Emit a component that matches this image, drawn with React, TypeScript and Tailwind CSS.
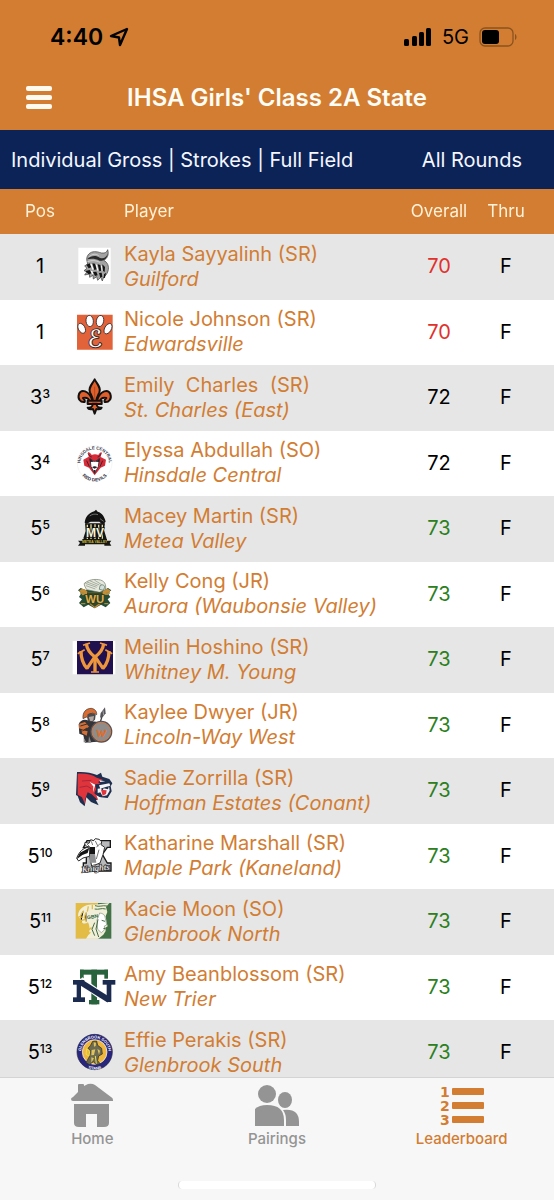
import type { ReactNode } from "react"

type TPlayer = {
    pos: string;
    tie?: string;
    name: string;
    school: string;
    score: number;
    logo: ReactNode;
}

const Logo = ({ children, label }: { children: ReactNode; label: string }) => (
    <svg viewBox="0 0 132 132" className="mx-auto block size-11" role="img" aria-label={label}>{children}</svg>
)

const GuilfordLogo = (
    <>
        <path d="M19 8h97v109H19z" fill="#fff" />
        <path d="M44 44c0-14 10-24 24-24 12-1 18 6 28 4 6-1 9-4 11-10 5 16-2 27-12 32 12 6 17 18 13 32-3 10-8 15-13 18l-4 12-5-11-9 9-3-11-10 7-1-11-10 6-1-10-14 3 7-10-9-3 9-7-7-7 9-6z" fill="#a3a3a3" stroke="#3a3a3a" strokeWidth="2" />
        <path d="M45 43c12-12 28-12 38-5 12 5 21-1 24-13-1 17-13 24-24 22-14-7-25-7-38-4z" fill="#2a2a2a" />
        <path d="M52 35c9-9 20-9 28-3M46 50c14-5 26-4 38 2" stroke="#e9e9e9" strokeWidth="2" fill="none" />
        <path d="m43 59 10-4 5 12-8 3zM61 55l8 1 5 17-7 2zM77 58l8 2 3 17-6 2zM91 58l8 8-1 15-6-4zM40 78l13-3 6 10-9 3zM63 81l10-1 4 11-8 2zM81 84l8-1 2 12-6 3zM96 88l6-5-3 15-4 2z" fill="#141414" />
        <path d="m55 58 4-1 6 16-3 2zM71 58l4 1 4 17-3 1zM87 61l3 2 2 14-3 1zM56 78l5 0 3 9-4 1z" fill="#fff" />
    </>
)

const EdwardsvilleLogo = (
    <>
        <path d="M15 11h107v105H15z" fill="#e2633a" />
        <g fill="#fff" stroke="#3b2b2b" strokeWidth="2.5">
            <ellipse cx="29" cy="52" rx="10" ry="16" transform="rotate(-28 29 52)" />
            <ellipse cx="53" cy="30" rx="11" ry="17" transform="rotate(-6 53 30)" />
            <ellipse cx="84" cy="30" rx="11" ry="17" transform="rotate(12 84 30)" />
            <ellipse cx="108" cy="53" rx="10" ry="17" transform="rotate(30 108 53)" />
        </g>
        <text x="68" y="109" fontSize="72" textAnchor="middle" fontFamily="DejaVu Serif, DejaVu Sans, serif" fill="#fff" stroke="#3b2b2b" strokeWidth="6" strokeLinejoin="round" paintOrder="stroke">ℰ</text>
    </>
)

const StCharlesLogo = (
    <>
        <g fill="#e0602c" stroke="#141010" strokeWidth="6" strokeLinejoin="round">
            <path d="M60 70C50 44 28 38 21 54c-5 14 4 26 17 24 2-6-1-9-5-12 12-4 21 4 22 18z" />
            <path d="M76 70C86 44 108 38 115 54c5 14-4 26-17 24-2-6 1-9 5-12-12-4-21 4-22 18z" />
            <path d="M68 10C60 26 48 34 54 50c5 10 9 16 9 26h10c0-10 4-16 9-26 6-16-6-24-14-40z" />
            <path d="M62 84c0 10-6 12-15 11 3 8 13 4 16 4l5 14 5-14c3 0 13 4 16-4-9 1-15-1-15-11z" />
            <path d="M47 74h42v10H47z" />
        </g>
        <path d="M68 32v40M60 79h16" stroke="#9e3d18" strokeWidth="2" />
    </>
)

const HinsdaleLogo = (
    <>
        <circle cx="68" cy="63" r="52" fill="#fff" stroke="#e2e2e4" strokeWidth="1" />
        <defs>
            <path id="hc-top" d="M26 74a43 43 0 1 1 84 0" />
            <path id="hc-bottom" d="M18 68a50 50 0 0 0 100 0" />
        </defs>
        <text fontSize="13" fontWeight="700" fill="#30303f" fontFamily="Liberation Sans, sans-serif" textAnchor="middle">
            <textPath href="#hc-top" startOffset="50%">HINSDALE CENTRAL</textPath>
        </text>
        <text fontSize="14" fontWeight="700" fill="#30303f" fontFamily="Liberation Sans, sans-serif" textAnchor="middle">
            <textPath href="#hc-bottom" startOffset="50%">RED DEVILS</textPath>
        </text>
        <path d="M50 44 48 30c6 2 9 5 11 9 6-3 14-3 20 0 2-4 5-7 10-9l-3 15 16 8-3 18-13 6-18 23-17-23-14-6-3-18z" fill="#d92c39" />
        <path d="m54 50 12 8h4l12-8-3 24-11 20-11-20z" fill="#fff" stroke="#26202a" strokeWidth="2.5" />
        <path d="m52 49 14 10-12 1zM84 49 70 59l12 1zM60 76c5-4 11-4 16 0l-8 4zM65 84h6l-3 12z" fill="#26202a" />
        <path d="M48 34c3 6 5 10 11 11M88 34c-3 6-5 10-11 11M44 56l8 18M92 56l-8 18" stroke="#26202a" strokeWidth="2.5" fill="none" />
    </>
)

const MeteaLogo = (
    <>
        <path d="M38 47c2-16 11-29 29-34l5-5 5 6c14 4 21 16 24 30l-9 9-10-9H56l-12 6z" fill="#121212" />
        <path d="M53 27c8-6 17-7 25-4M84 35l11 8" stroke="#9c9c9c" strokeWidth="2" fill="none" />
        <path d="M39 49h60l-3 20 8 26-8 7H41l-7-8 7-22z" fill="#151515" />
        <path d="M46 53v46M57 52v48M69 52v48M80 53v46M91 53v42" stroke="#e3df9b" strokeWidth="4" />
        <text x="69" y="89" textAnchor="middle" fontSize="36" fontWeight="700" fontFamily="Liberation Sans Narrow, Liberation Sans, sans-serif" fill="#f6f3d6" stroke="#111" strokeWidth="4" paintOrder="stroke">MV</text>
        <path d="M18 101h13v-5h74v5h13l-5 7 5 8H97v-4H39v4H18l6-8z" fill="#171713" />
        <text x="68" y="109" textAnchor="middle" fontSize="10" fontWeight="700" fontFamily="Liberation Sans, sans-serif" fill="#c9bd3c">METEA VALLEY</text>
    </>
)

const WaubonsieLogo = (
    <>
        <path d="M26 45 18 52l10 8-7 12 9 7-9 11 14 13 14-8 19 11 19-11 14 8 14-13-8-11 8-7-8-12 11-8-10-7-12 6H41z" fill="#254c35" />
        <path d="M22 52c11-8 18-4 25 5h44c6-9 14-13 24-5l-8 14-12-1-2 22-24 19-24-19-2-22-12 2z" fill="#c48d36" />
        <path d="M44 50c-4-7-8-13-7-19 14-11 28-13 43-11 17 2 24 14 20 30l-17 8z" fill="#e7e9df" stroke="#66745f" strokeWidth="2" />
        <path d="m40 31 34 12M45 27l32 12M53 23l29 13M42 38l28 10M67 21l22 14" stroke="#83907d" strokeWidth="2" />
        <path d="M84 38c8-5 13-2 14 5l-4 9-12-3z" fill="#d3dfdc" stroke="#4f6a55" strokeWidth="2" />
        <path d="M45 58h47v25L68 101 45 83z" fill="#30482b" />
        <text x="68" y="90" textAnchor="middle" fontSize="34" fontWeight="700" fontFamily="Liberation Sans, sans-serif" fill="#e2ad48" stroke="#263d26" strokeWidth="5" paintOrder="stroke">WU</text>
        <path d="M24 60h11M102 60h12M27 92h13M97 92h12" stroke="#a78a42" strokeWidth="4" />
    </>
)

const WhitneyLogo = (
    <>
        <path d="M2 9h128v100H2z" fill="#fff" />
        <path d="M15 9h108v100H15z" fill="#20104f" />
        <g fill="none" stroke="#ee963c">
            <g strokeWidth="10" strokeLinejoin="bevel">
                <path d="M27 39c0 22 6 39 18 52l24-35 24 35c12-13 18-30 18-52" />
                <path d="M43 17c2 18 12 30 26 40 14-10 24-22 26-40M69 57v44" />
            </g>
            <path d="m17 47 21-12M121 47 100 35M33 22l21-7M105 22l-21-7M57 102h24" strokeWidth="5" />
        </g>
    </>
)

const LincolnLogo = (
    <>
        <path d="M33 44c-2-19 9-31 25-31 11 2 17 9 16 19l-13-5-9 18-9-6z" fill="#d96c31" stroke="#38302f" strokeWidth="2" />
        <path d="M46 32c7-7 18-6 25 1l-2 14-9 8-13-5z" fill="#4b4b4d" />
        <path d="m50 39 16-3-2 13-8 5z" fill="#b2a7a1" />
        <path d="M20 61c5-13 18-17 31-10l22 2 10 16-8 44-36 3-5-22-12-5z" fill="#343337" />
        <path d="m22 59 17-5 12 14-15 10-15-5zM29 78l18 4-3 13-14-7z" fill="#d36f36" />
        <path d="m25 66 20-6M31 81l14-9" stroke="#38302f" strokeWidth="3" />
        <path d="M94 25 83 60" stroke="#3f3e42" strokeWidth="4" />
        <path d="m99 10 2 18-8 10-9 3 2-14z" fill="#56555a" />
        <path d="m93 19 2 15" stroke="#c5c5c5" strokeWidth="2" />
        <circle cx="88" cy="83" r="33" fill="#555357" />
        <circle cx="88" cy="83" r="28" fill="#8f8c8c" stroke="#d17b48" strokeWidth="3" />
        <text x="87" y="100" textAnchor="middle" fontSize="46" fontStyle="italic" fontFamily="Liberation Serif, serif" fill="#dc6f30" stroke="#dc6f30" strokeWidth="2">w</text>
        <path d="m35 101 8 14h-8zM51 96l7 20h-9z" fill="#8e8b8b" />
    </>
)

const ConantLogo = (
    <>
        <path d="M15 9c24-1 42 1 60 9l12-7 4 12 21 7 9 13-5 9 3 15-12 20-21-2-14 9 8 15-23-10-14-14-5 27-14-12-7-19-5-3z" fill="#1e2e4f" />
        <path d="M17 14c26-1 43 3 57 12l18 6-14 7 7 6-16 1 3 15-5 12 12 11-2 9-18-17-12-6-7 19-1 17-9-21-13-8z" fill="#df343b" />
        <path d="m82 34 18 3-15 2zM81 49l31-6 3 7-14 4-16 5zM77 59l10-1 4 9 4-9 13 3 3-9 2 13-8 14-13 3-7-12-8 2z" fill="#f6f3f5" />
        <path d="m87 62 17 2-2 11-10 5z" fill="#df343b" />
        <path d="m53 39 17 8-7 23 1-18zM73 79l15 8-10 4zM62 49l-13 2" fill="#fff" />
        <path d="m23 55 22-4 13 8M30 36l28-2" stroke="#a9263c" strokeWidth="3" fill="none" />
    </>
)

const KanelandLogo = (
    <>
        <path d="M45 17h70v20h-9L91 58l15 26h11v24H34V84h9V38h-9z" fill="#b8babb" stroke="#161616" strokeWidth="4" />
        <path d="M14 70c7-20 19-31 37-34-9-2-14-6-12-14l12 3 5-11 9 3 5-6 11 2 8 7-2 9 11 8-5 22-9 25-25 10-6-30-20 5-13 9z" fill="#fff" stroke="#2b2b2b" strokeWidth="3" />
        <path d="m14 73 10-20 28-15-5 16-16 6zM52 36h17v27H51z" fill="#151515" />
        <path d="m70 18 8 16M85 25l-12 12M45 27l9 9M81 44l-8 28M58 19l4 11" stroke="#777" strokeWidth="3" fill="none" />
        <path d="M53 57h16l4 26H53z" fill="#8e9091" />
        <text x="72" y="108" textAnchor="middle" fontSize="26" fontStyle="italic" fontWeight="700" fontFamily="Liberation Serif, serif" fill="#e4e4e4" stroke="#222" strokeWidth="4" paintOrder="stroke" transform="rotate(-6 72 108)">Knights</text>
    </>
)

const GlenbrookNorthLogo = (
    <>
        <path d="M11 9h68v107H11z" fill="#e2bc45" />
        <path d="M78 9h40v107H78z" fill="#437247" />
        <path d="M18 47c2-24 23-36 49-33l45-5-10 12 4 15-5 13 3 19 3 11-7 4 1 10-7 11-15 12H42c13-17 13-35 6-49-10 7-19 3-20-5z" fill="#f1efd8" />
        <path d="M35 32c-10 10-13 25-8 36M43 37c-6 10-6 20 0 29M49 19l-3 16M61 14v14M20 49l14 3M24 63l15-5M46 92l13-9M42 109l13-12" stroke="#e2bc45" strokeWidth="4" />
        <path d="M69 17c13 5 22-2 36 1M68 27c13 3 19-4 33 0" stroke="#437247" strokeWidth="3" fill="none" />
        <path d="M83 39c10 1 16 5 17 16l4 20-7 3 1 11-10 9-11-10-2-28z" fill="#fff" stroke="#7d917e" strokeWidth="2" />
        <path d="m89 61 10 3M94 86l6-1M78 58l-6 29 8 24M68 68l-8 20 8 19" stroke="#426b47" strokeWidth="3" fill="none" />
        <text x="46" y="58" fontSize="15" fontWeight="700" fontFamily="Liberation Sans, sans-serif" fill="#295f37" transform="rotate(-10 46 58)">GBN</text>
    </>
)

// interlocked bars, green behind navy
const NewTrierLogo = (
    <>
        <g fill="#28633d">
            <rect x="24" y="11" width="84" height="15" />
            <rect x="24" y="11" width="11" height="27" />
            <rect x="97" y="11" width="11" height="27" />
            <rect x="58" y="11" width="17" height="104" />
            <rect x="51" y="102" width="31" height="13" />
        </g>
        <line x1="24" y1="43" x2="108" y2="104" stroke="#fff" strokeWidth="23" />
        <g fill="#1b2b50">
            <rect x="3" y="42" width="34" height="14" />
            <rect x="3" y="94" width="36" height="14" />
            <rect x="14" y="42" width="13" height="66" />
            <rect x="92" y="42" width="38" height="14" />
            <rect x="104" y="42" width="14" height="66" />
        </g>
        <line x1="25" y1="48" x2="111" y2="102" stroke="#1b2b50" strokeWidth="17" />
    </>
)

const GlenbrookSouthLogo = (
    <>
        <circle cx="68" cy="63" r="53" fill="#29277d" stroke="#1d1d42" strokeWidth="2" />
        <circle cx="68" cy="63" r="37" fill="#efb73d" stroke="#fff" strokeWidth="2" />
        <defs>
            <path id="gbs-top" d="M28 72a41 41 0 1 1 80 0" />
            <path id="gbs-bottom" d="M18 66a50 50 0 0 0 100 0" />
        </defs>
        <text fontSize="12" fontWeight="700" fill="#fff" fontFamily="Liberation Sans, sans-serif" textAnchor="middle">
            <textPath href="#gbs-top" startOffset="50%">GLENBROOK SOUTH</textPath>
        </text>
        <text fontSize="12" fontWeight="700" fill="#fff" fontFamily="Liberation Sans, sans-serif" textAnchor="middle">
            <textPath href="#gbs-bottom" startOffset="50%">TITANS</textPath>
        </text>
        <path d="m62 31 12-1 3 13 12 9 2 17-11 6-3 14 8 10-12 2-9-9-12 9-10-6 10-18 3-19-7-6 7-8z" fill="#6c6a50" stroke="#292722" strokeWidth="2" />
        <path d="m65 34 7 1-1 10-5 2zM59 57l11-2-4 17-8 1zM76 53l8 6-3 12zM58 79l8 3-8 13z" fill="#dfc35d" />
        <path d="m44 53 9 8-2 14-9-5zM70 75l3 23" stroke="#e9e04d" strokeWidth="3" fill="none" />
    </>
)

const players: TPlayer[] = [
    { pos: "1", name: "Kayla Sayyalinh (SR)", school: "Guilford", score: 70, logo: GuilfordLogo },
    { pos: "1", name: "Nicole Johnson (SR)", school: "Edwardsville", score: 70, logo: EdwardsvilleLogo },
    { pos: "3", tie: "3", name: "Emily  Charles  (SR)", school: "St. Charles (East)", score: 72, logo: StCharlesLogo },
    { pos: "3", tie: "4", name: "Elyssa Abdullah (SO)", school: "Hinsdale Central", score: 72, logo: HinsdaleLogo },
    { pos: "5", tie: "5", name: "Macey Martin (SR)", school: "Metea Valley", score: 73, logo: MeteaLogo },
    { pos: "5", tie: "6", name: "Kelly Cong (JR)", school: "Aurora (Waubonsie Valley)", score: 73, logo: WaubonsieLogo },
    { pos: "5", tie: "7", name: "Meilin Hoshino (SR)", school: "Whitney M. Young", score: 73, logo: WhitneyLogo },
    { pos: "5", tie: "8", name: "Kaylee Dwyer (JR)", school: "Lincoln-Way West", score: 73, logo: LincolnLogo },
    { pos: "5", tie: "9", name: "Sadie Zorrilla (SR)", school: "Hoffman Estates (Conant)", score: 73, logo: ConantLogo },
    { pos: "5", tie: "10", name: "Katharine Marshall (SR)", school: "Maple Park (Kaneland)", score: 73, logo: KanelandLogo },
    { pos: "5", tie: "11", name: "Kacie Moon (SO)", school: "Glenbrook North", score: 73, logo: GlenbrookNorthLogo },
    { pos: "5", tie: "12", name: "Amy Beanblossom (SR)", school: "New Trier", score: 73, logo: NewTrierLogo },
    { pos: "5", tie: "13", name: "Effie Perakis (SR)", school: "Glenbrook South", score: 73, logo: GlenbrookSouthLogo },
]

const scoreClass = (score: number) => {
    if (score < 72) return "text-[#e0312c]"
    if (score > 72) return "text-[#2b8020]"
    return "text-black"
}

const StatusBar = () => (
    <div className="flex h-[74px] items-center justify-between pl-[50px] pr-[37px] text-black">
        <div className="flex items-center gap-1.5">
            <span className="text-[23px] font-semibold">4:40</span>
            <svg viewBox="0 0 20 20" className="size-5" fill="none" stroke="currentColor" strokeWidth="2.4" strokeLinejoin="round">
                <path d="M18 2 2 9l8 1.5L11 18z" />
            </svg>
        </div>
        <div className="flex items-center gap-2.5">
            <svg viewBox="0 0 28 18" className="h-[18px] w-7" fill="currentColor">
                <rect x="0" y="11" width="5" height="7" rx="1.5" />
                <rect x="8" y="8" width="5" height="10" rx="1.5" />
                <rect x="15" y="4" width="5" height="14" rx="1.5" />
                <rect x="22" y="0" width="5" height="18" rx="1.5" />
            </svg>
            <span className="text-xl">5G</span>
            <svg viewBox="0 0 38 20" className="h-5 w-[38px]">
                <rect x="1" y="1" width="33" height="18" rx="5" fill="none" stroke="#8a531f" strokeWidth="1.3" />
                <rect x="3" y="3" width="17" height="14" rx="3" />
                <path d="M36 7c2 1 2 5 0 6z" fill="#8a531f" />
            </svg>
        </div>
    </div>
)

const HomeIcon = () => (
    <svg viewBox="0 0 44 44" className="size-11" fill="currentColor">
        <path d="M8 9V2q0-1 1-1h4q1 0 1 1v1l4-2q4-1 7 1l16 12q2 1 2 3v1H3q-2 0-2-2 0-1 2-2z" />
        <path d="M4 21h35v19q0 4-5 4h-7V31H16v13H9q-5 0-5-4z" />
    </svg>
)

const PairingsIcon = () => (
    <svg viewBox="0 0 44 44" className="size-11" fill="currentColor">
        <ellipse cx="12" cy="11" rx="9" ry="9" />
        <ellipse cx="30" cy="17" rx="7" ry="8" />
        <path d="M0 43V26q4-4 12-4 17 0 17 15v6z" />
        <path d="M31 43v-6q0-6-3-10 16-2 16 12v4z" />
    </svg>
)

const LeaderboardIcon = () => (
    <svg viewBox="0 0 44 44" className="size-11" fill="currentColor">
        <g fontFamily="DejaVu Sans, sans-serif" fontWeight="700" fontSize="14">
            <text x="0" y="14">1</text>
            <text x="0" y="28">2</text>
            <text x="0" y="42">3</text>
        </g>
        <rect x="12" y="5" width="32" height="7" rx="1" />
        <rect x="12" y="19" width="32" height="7" rx="1" />
        <rect x="12" y="33" width="32" height="7" rx="1" />
    </svg>
)

const tabs = [
    { title: "Home", icon: <HomeIcon />, active: false },
    { title: "Pairings", icon: <PairingsIcon />, active: false },
    { title: "Leaderboard", icon: <LeaderboardIcon />, active: true },
]

const App = () => {
    return (
        <div className="flex h-screen flex-col bg-white font-[Inter,'Liberation_Sans',sans-serif]">
            <header className="shrink-0 bg-[#d27d32]">
                <StatusBar />
                <div className="grid h-14 grid-cols-[78px_1fr_78px] items-start">
                    <button type="button" aria-label="Menu" className="flex w-[78px] flex-col items-center gap-1 pt-3">
                        <span className="h-[5px] w-[26px] rounded-xs bg-[#fffaf0]"></span>
                        <span className="h-[5px] w-[26px] rounded-xs bg-[#fffaf0]"></span>
                        <span className="h-[5px] w-[26px] rounded-xs bg-[#fffaf0]"></span>
                    </button>
                    <h1 className="pt-2 text-center text-2xl font-semibold whitespace-nowrap text-[#fffdf5]">IHSA Girls' Class 2A State</h1>
                </div>
                <div className="flex h-[59px] items-center justify-between bg-[#0c2357] text-xl text-[#f4f7ff]">
                    <button type="button" className="h-full pl-[11px] text-left">Individual Gross | Strokes | Full Field</button>
                    <button type="button" className="h-full pr-8">All Rounds</button>
                </div>
            </header>
            <main className="min-h-0 flex-1 overflow-y-auto [scrollbar-width:none]">
                <table className="w-full table-fixed">
                    <thead className="sticky top-0 z-10 bg-[#d27d32] text-[17px] text-[#fff2d8]">
                        <tr className="h-[45px]">
                            <th className="w-[68px] p-0 pl-3 font-normal">Pos</th>
                            <th className="w-[52px] p-0"></th>
                            <th className="p-0 pl-1 text-left font-normal">Player</th>
                            <th className="w-[78px] p-0 font-normal">Overall</th>
                            <th className="w-[76px] p-0 pr-5 font-normal">Thru</th>
                        </tr>
                    </thead>
                    <tbody className="text-xl">
                        {players.map((player) => (
                            <tr key={player.name} className="h-[65px] bg-white odd:h-[66px] odd:bg-[#e6e6e6]">
                                <td className="p-0 pb-0.5 pl-3 text-center">
                                    {player.pos}
                                    {player.tie && <sup className="text-xs font-medium">{player.tie}</sup>}
                                </td>
                                <td className="p-0"><Logo label={player.school}>{player.logo}</Logo></td>
                                <td className="p-0 pb-px pl-1 leading-[25px] whitespace-pre text-[#d27d32]">
                                    <div>{player.name}</div>
                                    <div className="italic">{player.school}</div>
                                </td>
                                <td className={`p-0 pb-0.5 text-center ${scoreClass(player.score)}`}>{player.score}</td>
                                <td className="p-0 pr-5 pb-0.5 text-center">F</td>
                            </tr>
                        ))}
                    </tbody>
                </table>
            </main>
            <footer className="shrink-0 border-t border-[#d4d4d4] bg-[#f7f7f7] pb-[11px]">
                <nav className="grid grid-cols-3">
                    {tabs.map((tab) => (
                        <a key={tab.title} href="#" className={`flex h-[103px] flex-col items-center pt-[5px] text-[15px] leading-6 font-medium ${tab.active ? "text-[#d27d32]" : "text-[#949494]"}`}>
                            {tab.icon}
                            <span>{tab.title}</span>
                        </a>
                    ))}
                </nav>
                <div className="mx-auto h-2 w-[198px] rounded-full border-x border-[#d8d8d8] bg-white"></div>
            </footer>
        </div>
    )
}

export default App
